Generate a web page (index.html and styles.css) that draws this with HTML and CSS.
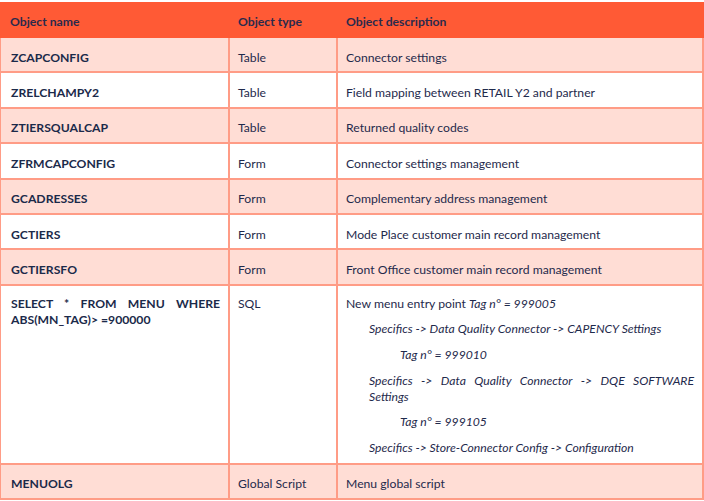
FILE: index.html
```html
<!DOCTYPE html>
<html>
<head>
<meta charset="utf-8">
<link rel="stylesheet" href="styles.css">
</head>
<body>
<table class="objects">
  <colgroup>
    <col class="c-name">
    <col class="c-type">
    <col class="c-desc">
  </colgroup>
  <thead>
    <tr>
      <th>Object name</th>
      <th>Object type</th>
      <th>Object description</th>
    </tr>
  </thead>
  <tbody>
    <tr class="alt"><td class="name">ZCAPCONFIG</td><td>Table</td><td>Connector settings</td></tr>
    <tr><td class="name">ZRELCHAMPY2</td><td>Table</td><td>Field mapping between RETAIL Y2 and partner</td></tr>
    <tr class="alt"><td class="name">ZTIERSQUALCAP</td><td>Table</td><td>Returned quality codes</td></tr>
    <tr><td class="name">ZFRMCAPCONFIG</td><td>Form</td><td>Connector settings management</td></tr>
    <tr class="alt"><td class="name">GCADRESSES</td><td>Form</td><td>Complementary address management</td></tr>
    <tr><td class="name">GCTIERS</td><td>Form</td><td>Mode Place customer main record management</td></tr>
    <tr class="alt"><td class="name">GCTIERSFO</td><td>Form</td><td>Front Office customer main record management</td></tr>
    <tr class="tall">
      <td class="name"><p class="just">SELECT * FROM MENU WHERE ABS(MN_TAG)&gt; =900000</p></td>
      <td><p>SQL</p></td>
      <td>
        <p>New menu entry point <em>Tag n° = 999005</em></p>
        <p class="i1 just"><em>Specifics -&gt; Data Quality Connector -&gt; CAPENCY Settings</em></p>
        <p class="i2"><em>Tag n° = 999010</em></p>
        <p class="i1 just"><em>Specifics -&gt; Data Quality Connector -&gt; DQE SOFTWARE Settings</em></p>
        <p class="i2"><em>Tag n° = 999105</em></p>
        <p class="i1"><em>Specifics -&gt; Store-Connector Config -&gt; Configuration</em></p>
      </td>
    </tr>
    <tr class="alt"><td class="name">MENUOLG</td><td>Global Script</td><td>Menu global script</td></tr>
  </tbody>
</table>
</body>
</html>
```
FILE: styles.css
```css
html, body {
  margin: 0;
  padding: 0;
  background: #ffffff;
}
body {
  padding-top: 2px;
  font-family: Lato, "Open Sans", sans-serif;
  font-size: 12.2px;
  color: #1f2a4c;
}
.objects {
  width: 704px;
  table-layout: fixed;
  border-collapse: separate;
  border-spacing: 0;
}
.c-name { width: 230px; }
.c-type { width: 108px; }
.c-desc { width: 366px; }

.objects th {
  background: #ff5a35;
  color: #2b2a4c;
  font-weight: bold;
  text-align: left;
  height: 36px;
  box-sizing: border-box;
  padding: 2px 8px 0;
  vertical-align: middle;
}
.objects th:first-child { padding-left: 10px; }

.objects td {
  box-sizing: border-box;
  height: 35.4px;
  padding: 5px 8px 0;
  vertical-align: middle;
  border-right: 2px solid #ff9c86;
  border-bottom: 2px solid #ff9c86;
  background: #ffffff;
}
.objects td:first-child {
  border-left: 1px solid #ff9c86;
  padding-left: 10px;
}
.objects tr.alt td { background: #ffddd5; }
.objects td.name { font-weight: bold; color: #1b2a4a; }

.objects tr.tall td {
  vertical-align: top;
  padding-top: 10px;
  padding-bottom: 7px;
  height: auto;
}
.objects p {
  margin: 0 0 9.6px;
  line-height: 16px;
}
.objects p:last-child { margin-bottom: 0; }
.just { text-align: justify; }
.i1 { padding-left: 23px; }
.i2 { padding-left: 54px; }
em { font-style: italic; }
```
